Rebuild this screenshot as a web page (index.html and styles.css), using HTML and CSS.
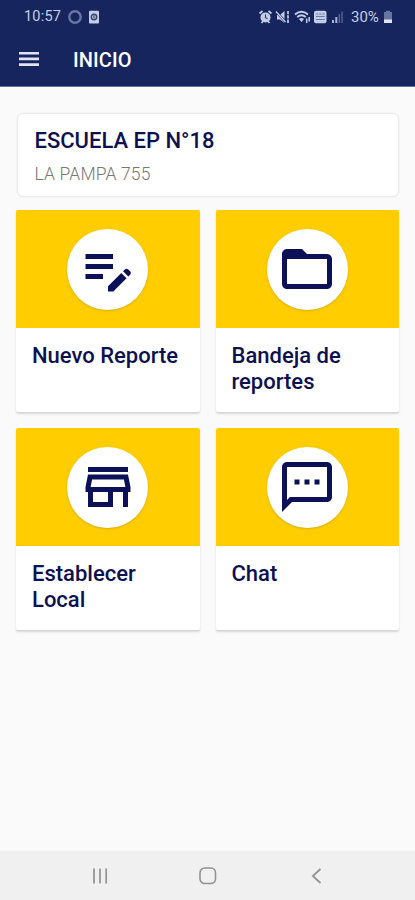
FILE: index.html
```
<!DOCTYPE html>
<html lang="es">
<head>
<meta charset="utf-8">
<meta name="viewport" content="width=device-width, initial-scale=1">
<title>Inicio</title>
<link rel="stylesheet" href="styles.css">
</head>
<body>
<div class="app">
  <header class="header">
    <div class="status">
      <span class="clock">10:57</span>
      <svg class="status-left" width="34" height="16" viewBox="0 0 34 16">
        <circle cx="8" cy="8" r="5.7" fill="none" stroke="#6876a3" stroke-width="2.4"/>
        <rect x="22" y="1.8" width="10" height="12.6" rx="1" fill="#c5cde5"/>
        <circle cx="27" cy="8" r="2.7" fill="none" stroke="#34447a" stroke-width="1.5"/>
        <path d="M27 6.3v3.2" stroke="#34447a" stroke-width="1.2"/>
      </svg>
      <svg class="status-right" width="86" height="16" viewBox="0 0 86 16">
        <circle cx="7.5" cy="8.400" r="5" fill="#c5cde5"/>
        <path d="M7.500 5.500v3.200l2 1" fill="none" stroke="#34447a" stroke-width="1.200"/>
        <g fill="none" stroke="#c5cde5">
          <path d="M1.500 4.500 4.500 2M13.500 4.500 10.500 2M3.500 14l1.700-2M11.500 14l-1.700-2" stroke-width="1.700"/>
          <path d="M30 2v12" stroke-width="1.700" stroke-dasharray="3.300 1"/>
          <path d="M37 5.500Q43.500 0 50 5.500M39.200 8q4.300-3.500 8.600 0" stroke-width="1.900"/>
          <path d="M48.700 9.500v4.500M51.200 8v4.500" stroke-width="1.500"/>
        </g>
        <path d="M19 6h3l4.500-4v12L22 10.500h-3zM41 10q2.500-2 5 0l-2.500 3z" fill="#c5cde5"/>
        <path d="m18.500 3 9.500 10.500" stroke="#17255f" stroke-width="2.600"/>
        <path d="m18 2.500 9.500 10.500" stroke="#c5cde5" stroke-width="1.300"/>
        <rect x="56" y="1.800" width="12.500" height="12.500" rx="2" fill="#c5cde5"/>
        <path d="M58 5h2.300M61.200 5h2.300M64.400 5h2.300M58 7.500h8.700M58 10.500h8.700" stroke="#687aa9" stroke-width="1.100"/>
        <path d="M74 14v-3h2v3zM77.300 14V8h2v6z" fill="#aab5d4"/>
        <path d="M80.600 14V5h1.500v9zM83.300 14V2.500h1.500V14z" fill="#53628f"/>
      </svg>
      <span class="percent">30%</span>
      <svg class="battery" width="10" height="14" viewBox="0 0 10 14">
        <path d="M1 2h2V.8h4V2h2v8H1z" fill="#66749f"/>
        <path d="M1 9.500h8V13H1z" fill="#dfe4f2"/>
      </svg>
    </div>
    <div class="toolbar">
      <svg class="menu" width="21" height="16" viewBox="0 0 21 16"><path d="M0 2.200h20M0 7.900h20M0 13.600h20" stroke="#e0e4f2" stroke-width="2.600"/></svg>
      <h1 class="title">INICIO</h1>
    </div>
  </header>
  <main class="content">
    <section class="school">
      <h2 class="school-name">ESCUELA EP N°18</h2>
      <p class="school-address">LA PAMPA 755</p>
    </section>
    <div class="grid">
      <a class="card">
        <div class="banner"><div class="disc"><svg class="icon" viewBox="0 0 24 24"><path d="M3 10h11v2H3v-2zm0-2h11V6H3v2zm0 8h7v-2H3v2zm15.010-3.130.710-.710c.390-.390 1.020-.390 1.410 0l.710.710c.390.390.390 1.020 0 1.410l-.710.710-2.120-2.120zm-.710.710-5.300 5.300V21h2.120l5.300-5.300-2.120-2.120z"/></svg></div></div>
        <div class="label">Nuevo Reporte</div>
      </a>
      <a class="card">
        <div class="banner"><div class="disc"><svg class="icon" viewBox="0 0 24 24"><path d="M20 6h-8l-2-2H4c-1.100 0-1.990.9-1.990 2L2 18c0 1.100.9 2 2 2h16c1.100 0 2-.9 2-2V8c0-1.100-.9-2-2-2zm0 12H4V8h16v10z"/></svg></div></div>
        <div class="label">Bandeja de<br>reportes</div>
      </a>
      <a class="card">
        <div class="banner"><div class="disc"><svg class="icon" viewBox="0 0 24 24"><path d="M18.360 9l.6 3H5.040l.6-3h12.720M20 4H4v2h16V4zm0 3H4l-1 5v2h1v6h10v-6h4v6h2v-6h1v-2l-1-5zM6 18v-4h6v4H6z"/></svg></div></div>
        <div class="label">Establecer<br>Local</div>
      </a>
      <a class="card">
        <div class="banner"><div class="disc"><svg class="icon" viewBox="0 0 24 24"><path d="M20 2H4c-1.100 0-1.990.9-1.990 2L2 22l4-4h14c1.100 0 2-.9 2-2V4c0-1.100-.9-2-2-2zm0 14H5.170L4 17.170V4h16v12zM7 9h2v2H7zm8 0h2v2h-2zm-4 0h2v2h-2z"/></svg></div></div>
        <div class="label">Chat</div>
      </a>
    </div>
  </main>
  <nav class="navbar">
    <svg width="18" height="18" viewBox="0 0 18 18"><path d="M3 1.500v15M9 1.500v15M15.200 1.500v15" stroke="#929292" stroke-width="1.700"/></svg>
    <svg width="18" height="18" viewBox="0 0 18 18"><rect x="1" y="1" width="15.500" height="15.500" rx="4.800" fill="none" stroke="#929292" stroke-width="1.600"/></svg>
    <svg width="18" height="18" viewBox="0 0 18 18"><path d="M13.500 2 5.800 9l7.700 7" fill="none" stroke="#929292" stroke-width="1.700"/></svg>
  </nav>
</div>
</body>
</html>
```
FILE: styles.css
```
* { box-sizing: border-box; }

body {
  margin: 0;
  font-family: Roboto, "Liberation Sans", sans-serif;
  background: #fafafa;
}

.app {
  display: flex;
  flex-direction: column;
  height: 900px;
}

.header {
  height: 87px;
  background: #17255f;
  border-bottom: 1px solid #686f9c;
}

.status {
  display: flex;
  align-items: center;
  height: 33px;
  padding: 0 22px 0 24px;
  color: #c5cde5;
  font-size: 14.500px;
}

.clock { width: 37px; letter-spacing: 0.200px; }
.status-left { margin-left: 6px; }
.status-right { margin-left: auto; }
.percent { width: 28px; margin-left: 7px; font-size: 15px; }
.battery { margin-left: 4px; }

.toolbar {
  display: flex;
  align-items: center;
  height: 53px;
  padding-left: 19px;
}

.menu { margin-bottom: 2px; }

.title {
  margin: 0 0 0 33px;
  color: #fff;
  font-size: 20px;
  font-weight: 500;
  letter-spacing: 0.100px;
}

.content {
  flex: 1;
  padding: 27px 16px 0 16px;
}

.school {
  height: 82px;
  margin: 0 1px 0 2px;
  padding: 13px 16.500px;
  background: #fff;
  border-radius: 5px;
  box-shadow: 0 0 2px 1px #e4e4e4;
}

.school-name {
  margin: 0;
  color: #0d114f;
  font-size: 22px;
  font-weight: 500;
  line-height: 28px;
}

.school-address {
  margin: 8px 0 0;
  color: #777;
  font-size: 17.500px;
  font-weight: 300;
  letter-spacing: 0.150px;
  line-height: 22px;
}

.grid {
  display: grid;
  grid-template-columns: 1fr 1fr;
  gap: 16px;
  margin-top: 14px;
}

.card {
  height: 202px;
  overflow: hidden;
  background: #fff;
  border-radius: 2px;
  box-shadow: 0 2px 2px #d5d5d5;
}

.banner {
  display: flex;
  align-items: center;
  justify-content: center;
  height: 118px;
  background: #ffcd00;
}

.disc {
  display: flex;
  align-items: center;
  justify-content: center;
  width: 81px;
  height: 81px;
  background: #fff;
  border-radius: 50%;
  box-shadow: 0 1px 2px #b9982b99;
}

.icon {
  width: 60px;
  height: 60px;
  fill: #0b1057;
}

.label {
  padding: 15px 16px;
  color: #0d114f;
  font-size: 22px;
  font-weight: 500;
  line-height: 26px;
}

.navbar {
  display: flex;
  align-items: center;
  justify-content: space-between;
  height: 49px;
  padding: 0 90px 0 91px;
  background: #f0f0f0;
}
```
